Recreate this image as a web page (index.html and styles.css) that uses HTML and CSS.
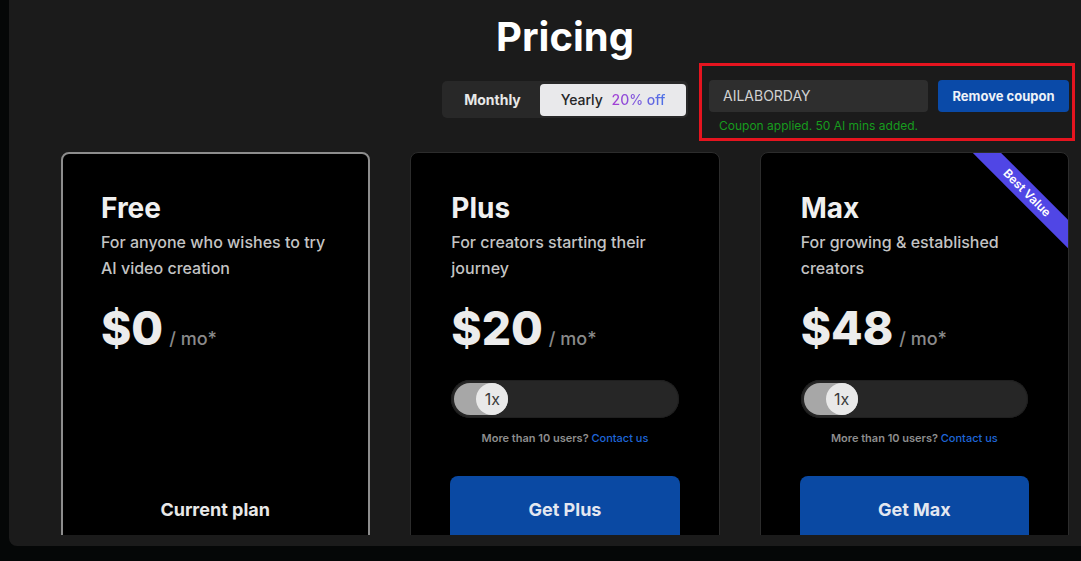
FILE: index.html
```html
<!DOCTYPE html>
<html lang="en">
<head>
<meta charset="utf-8">
<title>Pricing</title>
<link rel="stylesheet" href="styles.css">
</head>
<body>
<div class="panel">
  <div class="viewport">
    <h1 class="title">Pricing</h1>
    <div class="controls">
      <div class="billing-toggle">
        <button class="seg seg-monthly">Monthly</button>
        <button class="seg seg-yearly">Yearly <span class="discount">20% off</span></button>
      </div>
      <div class="coupon">
        <div class="coupon-row">
          <div class="coupon-input">AILABORDAY</div>
          <button class="btn-remove">Remove coupon</button>
        </div>
        <p class="coupon-msg">Coupon applied. 50 AI mins added.</p>
      </div>
    </div>
    <div class="plans">
      <div class="card card-current">
        <h2 class="plan-name">Free</h2>
        <p class="plan-desc">For anyone who wishes to try AI video creation</p>
        <div class="price"><span class="amount">$0</span><span class="per">/ mo*</span></div>
        <div class="plan-action plan-action-current">Current plan</div>
      </div>
      <div class="card">
        <h2 class="plan-name">Plus</h2>
        <p class="plan-desc">For creators starting their journey</p>
        <div class="price"><span class="amount">$20</span><span class="per">/ mo*</span></div>
        <div class="seat-slider"><div class="seat-fill"><div class="seat-knob">1x</div></div></div>
        <p class="seat-note">More than 10 users? <a class="contact">Contact us</a></p>
        <button class="plan-action plan-action-buy">Get Plus</button>
      </div>
      <div class="card card-featured">
        <div class="ribbon">Best Value</div>
        <h2 class="plan-name">Max</h2>
        <p class="plan-desc">For growing &amp; established creators</p>
        <div class="price"><span class="amount">$48</span><span class="per">/ mo*</span></div>
        <div class="seat-slider"><div class="seat-fill"><div class="seat-knob">1x</div></div></div>
        <p class="seat-note">More than 10 users? <a class="contact">Contact us</a></p>
        <button class="plan-action plan-action-buy">Get Max</button>
      </div>
    </div>
  </div>
</div>
</body>
</html>
```

FILE: styles.css
```css
* { box-sizing: border-box; }

html, body {
  margin: 0;
  padding: 0;
  height: 100%;
}

body {
  background: #050707;
  overflow: hidden;
  font-family: Inter, "Noto Sans", "Liberation Sans", sans-serif;
  color: #ececec;
}

.panel {
  margin-left: 9px;
  margin-top: -10px;
  width: calc(100% - 9px);
  height: 556px;
  background: #1b1b1b;
  border-radius: 8px 0 0 8px;
  padding: 23px 0 11px 52px;
  display: flex;
  flex-direction: column;
}

.viewport {
  width: 1008px;
  flex: 1;
  min-height: 0;
  display: flex;
  flex-direction: column;
}

.title {
  margin: 0;
  font-size: 40px;
  line-height: 48px;
  font-weight: 700;
  text-align: center;
  color: #ffffff;
}

.controls {
  margin-top: 2px;
  display: grid;
  grid-template-columns: minmax(0, 1fr) auto minmax(0, 1fr);
  align-items: start;
}

.billing-toggle {
  grid-column: 2;
  margin-top: 18px;
  display: flex;
  align-items: center;
  height: 37px;
  padding: 0 2px 0 3px;
  background: #282828;
  border-radius: 5px;
}

.seg {
  border: 0;
  font-family: inherit;
  font-size: 14px;
  height: 32px;
  padding: 0;
  border-radius: 4px;
  cursor: pointer;
}

.seg-monthly {
  width: 95px;
  background: transparent;
  color: #e8e8e8;
  font-weight: 700;
}

.seg-yearly {
  width: 146px;
  background: #e9e9eb;
  color: #262626;
  font-weight: 500;
  word-spacing: 5px;
}

.discount {
  word-spacing: 0;
  background: linear-gradient(90deg, #a63ed4, #4c72e6);
  -webkit-background-clip: text;
  background-clip: text;
  color: transparent;
}

.coupon {
  grid-column: 3;
  justify-self: start;
  margin-left: 11px;
  width: 376px;
  border: 3px solid #e5141f;
  padding: 14px 3px 4px 7px;
}

.coupon-row {
  display: flex;
  gap: 10px;
}

.coupon-input {
  flex: 1;
  height: 32px;
  background: #2e2e2e;
  border-radius: 4px;
  padding-left: 14px;
  font-size: 14px;
  line-height: 32px;
  color: #d2d2d2;
}

.btn-remove {
  width: 131px;
  height: 32px;
  border: 0;
  border-radius: 4px;
  background: #0a4aa8;
  color: #eef2f8;
  font-family: inherit;
  font-size: 13px;
  font-weight: 700;
}

.coupon-msg {
  margin: 6px 0 0;
  padding-left: 10px;
  font-size: 12px;
  line-height: 16px;
  color: #179c1e;
}

.plans {
  margin-top: 11px;
  flex: 1;
  min-height: 0;
  overflow: hidden;
  display: grid;
  grid-template-columns: repeat(3, 1fr);
  align-items: start;
  gap: 40px;
}

.card {
  position: relative;
  overflow: hidden;
  height: 429px;
  background: #000;
  border: 1px solid #2c2c2c;
  border-radius: 8px;
  padding: 38px 40px 38px;
  display: flex;
  flex-direction: column;
}

.card-current {
  border: 2px solid #8d8d8d;
  padding: 37px 39px 37px 38px;
}

.ribbon {
  position: absolute;
  top: 30px;
  right: -39px;
  width: 160px;
  height: 20px;
  transform: rotate(45deg);
  background: #5046e5;
  color: #fff;
  font-size: 12px;
  font-weight: 600;
  line-height: 20px;
  text-align: center;
}

.plan-name {
  margin: 0;
  font-size: 28px;
  line-height: 34px;
  font-weight: 700;
  color: #f0f0f0;
}

.plan-desc {
  margin: 4px 0 0;
  font-size: 16px;
  line-height: 26px;
  font-weight: 500;
  color: #c4c4c4;
}

.price {
  margin-top: 20px;
  display: flex;
  align-items: baseline;
  gap: 6px;
}

.amount {
  font-size: 46px;
  line-height: 55px;
  font-weight: 800;
  color: #ececec;
}

.per {
  font-size: 18px;
  font-weight: 500;
  color: #8a8a8a;
}

.seat-slider {
  margin-top: 24px;
  height: 38px;
  border-radius: 19px;
  background: #262626;
  padding: 3px;
  box-shadow: inset 0 0 0 1px #1f1f1f;
  display: flex;
  align-items: center;
}

.seat-fill {
  width: 54px;
  height: 32px;
  border-radius: 16px;
  background: #a7a7a7;
  display: flex;
  justify-content: flex-end;
}

.seat-knob {
  width: 32px;
  height: 32px;
  border-radius: 50%;
  background: #e9e9e9;
  color: #3a3a3a;
  font-size: 16px;
  line-height: 32px;
  text-align: center;
}

.seat-note {
  margin: 12px 0 0;
  font-size: 11px;
  line-height: 16px;
  font-weight: 600;
  color: #8e8e8e;
  text-align: center;
}

.contact {
  color: #1f66d8;
  font-weight: 500;
}

.plan-action {
  margin-top: auto;
  height: 66px;
  border: 0;
  border-radius: 8px;
  font-family: inherit;
  font-size: 18px;
  font-weight: 700;
  display: flex;
  align-items: center;
  justify-content: center;
  flex-shrink: 0;
}

.plan-action-current {
  color: #e8e8e8;
}

.plan-action-buy {
  background: #0a49a3;
  color: #e3e7f0;
  width: calc(100% + 2px);
  margin-left: -1px;
}
```
